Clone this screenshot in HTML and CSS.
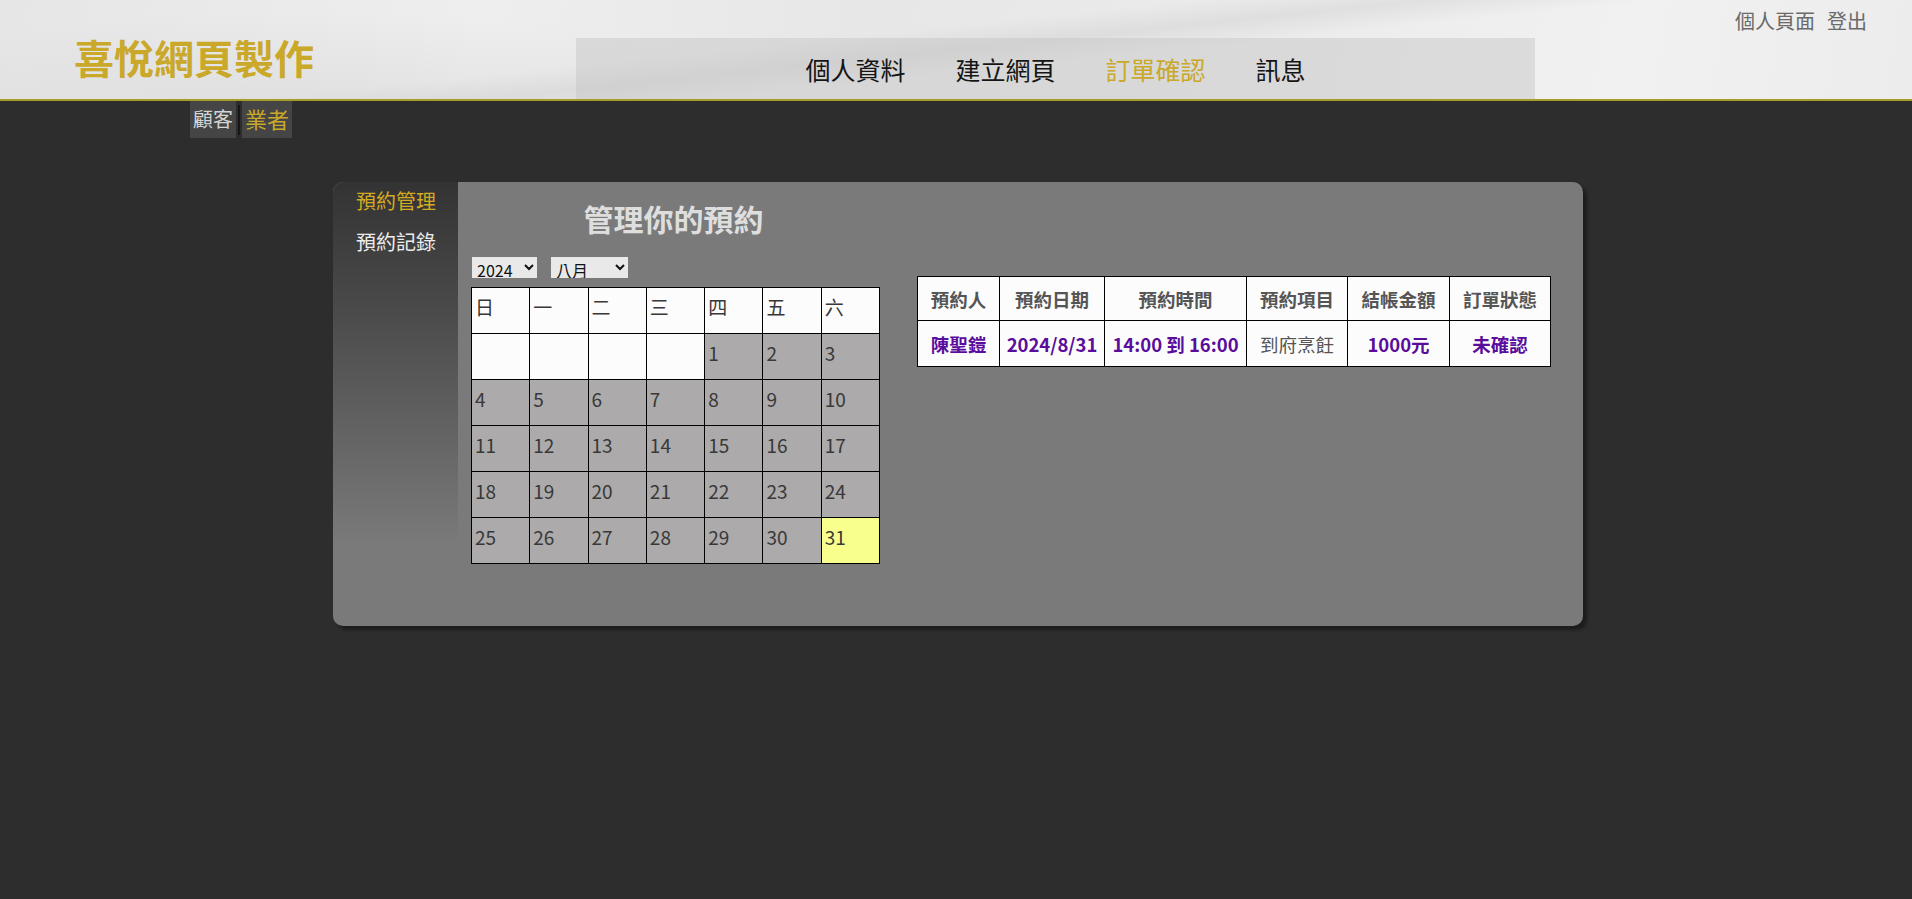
FILE: index.html
```html
<!DOCTYPE html>
<html lang="zh-Hant">
<head>
<meta charset="utf-8">
<title>喜悅網頁製作</title>
<link rel="stylesheet" href="styles.css">
</head>
<body>
<header class="site-header">
  <div class="logo">喜悅網頁製作</div>
  <nav class="main-nav">
    <a class="nav-item">個人資料</a>
    <a class="nav-item">建立網頁</a>
    <a class="nav-item active">訂單確認</a>
    <a class="nav-item">訊息</a>
  </nav>
  <div class="top-links">
    <a class="top-link">個人頁面</a>
    <a class="top-link">登出</a>
  </div>
</header>

<div class="role-tabs">
  <span class="role-tab">顧客</span>
  <span class="role-sep"></span>
  <span class="role-tab role-active">業者</span>
</div>

<section class="panel">
  <aside class="side-menu">
    <a class="side-link side-active">預約管理</a>
    <a class="side-link">預約記錄</a>
  </aside>
  <div class="panel-body">
    <div class="cal-col">
      <h1 class="panel-title">管理你的預約</h1>
      <div class="pickers">
        <select class="pick pick-year"><option>2024</option></select>
        <select class="pick pick-month"><option>八月</option></select>
      </div>
      <table class="calendar">
        <tr class="cal-head"><td>日</td><td>一</td><td>二</td><td>三</td><td>四</td><td>五</td><td>六</td></tr>
        <tr><td class="empty"></td><td class="empty"></td><td class="empty"></td><td class="empty"></td><td>1</td><td>2</td><td>3</td></tr>
        <tr><td>4</td><td>5</td><td>6</td><td>7</td><td>8</td><td>9</td><td>10</td></tr>
        <tr><td>11</td><td>12</td><td>13</td><td>14</td><td>15</td><td>16</td><td>17</td></tr>
        <tr><td>18</td><td>19</td><td>20</td><td>21</td><td>22</td><td>23</td><td>24</td></tr>
        <tr><td>25</td><td>26</td><td>27</td><td>28</td><td>29</td><td>30</td><td class="today">31</td></tr>
      </table>
    </div>
    <div class="order-col">
      <table class="orders">
        <colgroup>
          <col class="c1"><col class="c2"><col class="c3"><col class="c4"><col class="c5"><col class="c6">
        </colgroup>
        <tr>
          <th>預約人</th><th>預約日期</th><th>預約時間</th><th>預約項目</th><th>結帳金額</th><th>訂單狀態</th>
        </tr>
        <tr>
          <td class="hl">陳聖鎧</td><td class="hl">2024/8/31</td><td class="hl">14:00 到 16:00</td><td class="plain">到府烹飪</td><td class="hl">1000元</td><td class="hl">未確認</td>
        </tr>
      </table>
    </div>
  </div>
</section>
</body>
</html>
```

FILE: styles.css
```css
* { box-sizing: border-box; }

body {
  margin: 0;
  background: #2d2d2d;
  font-family: "Noto Sans CJK TC", "Noto Sans", sans-serif;
  min-height: 899px;
}

a { text-decoration: none; cursor: pointer; }

.site-header {
  height: 101px;
  display: flex;
  border-bottom: 2px solid #a39d2c;
  background:
    radial-gradient(ellipse 700px 140px at 300px 110px, rgba(200,200,200,0.35), rgba(255,255,255,0) 70%),
    linear-gradient(174deg, rgba(255,255,255,0) 42%, rgba(185,185,185,0.25) 50%, rgba(255,255,255,0) 58%),
    linear-gradient(100deg, #e6e6e6 0%, #eeeeee 25%, #e7e7e7 45%, #ebebeb 65%, #f1f1f1 85%, #ececec 100%);
}

.logo {
  margin: 37px 0 0 74px;
  font-size: 40px;
  line-height: 40px;
  height: 40px;
  font-weight: 700;
  color: #c9a82a;
  white-space: nowrap;
}

.main-nav {
  margin-left: 262px;
  margin-top: 38px;
  width: 959px;
  height: 61px;
  background: rgba(195, 195, 195, 0.45);
  display: flex;
  justify-content: center;
  align-items: center;
  gap: 50px;
}

.nav-item {
  font-size: 25px;
  line-height: 30px;
  color: #151515;
}

.nav-item.active { color: #c9a82a; }

.top-links {
  margin-left: auto;
  margin-right: 45px;
  margin-top: 6px;
  display: flex;
  gap: 12px;
  align-self: flex-start;
}

.top-link {
  font-size: 20px;
  line-height: 30px;
  color: #6a6a6a;
}

.role-tabs {
  display: flex;
  align-items: center;
  margin-left: 190px;
  height: 37px;
}

.role-tab {
  background: #454545;
  height: 37px;
  line-height: 35px;
  font-size: 20px;
  padding: 0 3px;
  color: #d4d4d4;
}

.role-tab.role-active {
  font-size: 22px;
  color: #c9a82a;
}

.role-sep {
  width: 2px;
  height: 30px;
  margin: 0 2px;
  background: #161616;
}

.panel {
  margin: 44px 0 0 333px;
  width: 1250px;
  height: 444px;
  background: #7a7a7a;
  border-radius: 10px;
  box-shadow: 4px 4px 3px #1d1d1d;
  display: flex;
  align-items: flex-start;
  overflow: hidden;
}

.side-menu {
  width: 125px;
  height: 363px;
  flex: none;
  background: linear-gradient(to bottom, #333333 0%, #4a4a4a 35%, #7a7a7a 100%);
  display: flex;
  flex-direction: column;
  gap: 13px;
  padding: 5px 0 0 23px;
}

.side-link {
  font-size: 20px;
  line-height: 28px;
  color: #ececec;
}

.side-link.side-active { color: #d4aa22; }

.panel-body {
  flex: 1;
  display: flex;
  align-items: flex-start;
  gap: 37px;
  padding: 18px 0 0 13px;
}

.cal-col {
  width: 409px;
  flex: none;
}

.panel-title {
  margin: 0;
  font-size: 30px;
  line-height: 36px;
  font-weight: 700;
  text-align: center;
  color: #dedede;
  padding-right: 4px;
}

.pickers {
  margin-top: 21px;
  display: flex;
  gap: 14px;
  padding-left: 1px;
}

.pick {
  height: 21px;
  border: none;
  border-radius: 0;
  background: #e9e9e9;
  font-family: "Noto Sans CJK TC", sans-serif;
  font-size: 16px;
  color: #111;
  padding: 0 0 0 1px;
}

.pick-year { width: 65px; }
.pick-month { width: 77px; }

.calendar {
  margin-top: 9px;
  width: 409px;
  border-collapse: collapse;
  table-layout: fixed;
}

.calendar td {
  height: 46px;
  border: 1px solid #000;
  background: #acaaaa;
  color: #383838;
  font-size: 19px;
  line-height: 26px;
  padding: 0 0 7px 3px;
  text-align: left;
  vertical-align: middle;
}

.calendar .cal-head td,
.calendar td.empty {
  background: #fcfcfc;
}

.calendar td.today { background: #f9ff8c; }

.order-col {
  margin-top: 76px;
}

.orders {
  width: 633px;
  border-collapse: collapse;
  table-layout: fixed;
  background: #fcfcfc;
}

.orders .c1 { width: 82px; }
.orders .c2 { width: 105px; }
.orders .c3 { width: 142px; }
.orders .c4 { width: 101px; }
.orders .c5 { width: 102px; }
.orders .c6 { width: 101px; }

.orders th,
.orders td {
  border: 1px solid #000;
  text-align: center;
  font-size: 18.5px;
  white-space: nowrap;
  padding: 0;
}

.orders th {
  height: 44px;
  font-weight: 700;
  color: #555;
}

.orders td {
  height: 46px;
}

.orders td.hl {
  font-weight: 700;
  color: #5a0d9c;
}

.orders td.plain {
  font-weight: 400;
  color: #555;
}
```
